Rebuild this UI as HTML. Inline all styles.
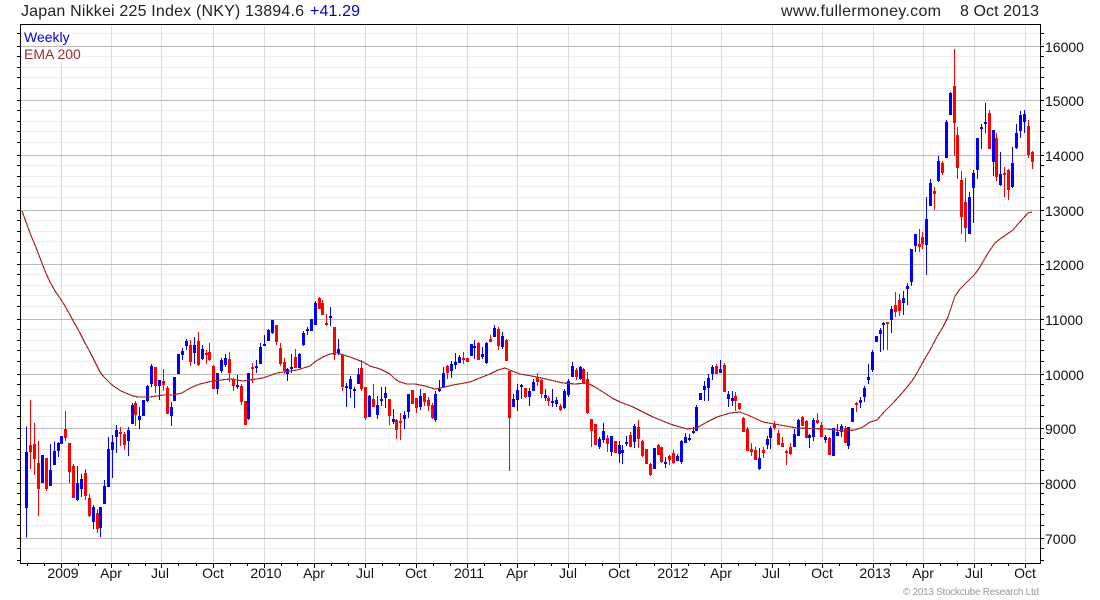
<!DOCTYPE html>
<html><head><meta charset="utf-8"><title>Japan Nikkei 225 Index</title>
<style>html,body{margin:0;padding:0;background:#fff}svg{display:block}text{font-family:"Liberation Sans",Arial,sans-serif}</style></head>
<body>
<svg width="1100" height="600" viewBox="0 0 1100 600" xmlns="http://www.w3.org/2000/svg">
<rect width="1100" height="600" fill="#fff"/>
<g fill="none" shape-rendering="crispEdges">
<path stroke="#eee" d="M21 33.5H1040M21 56.5H1040M21 67.5H1040M21 77.5H1040M21 88.5H1040M21 110.5H1040M21 121.5H1040M21 131.5H1040M21 142.5H1040M21 165.5H1040M21 176.5H1040M21 186.5H1040M21 197.5H1040M21 220.5H1040M21 231.5H1040M21 241.5H1040M21 252.5H1040M21 274.5H1040M21 285.5H1040M21 295.5H1040M21 306.5H1040M21 329.5H1040M21 340.5H1040M21 350.5H1040M21 361.5H1040M21 384.5H1040M21 395.5H1040M21 405.5H1040M21 416.5H1040M21 438.5H1040M21 449.5H1040M21 459.5H1040M21 470.5H1040M21 493.5H1040M21 504.5H1040M21 514.5H1040M21 525.5H1040M21 548.5H1040"/>
<path stroke="#dcdcdc" d="M61.5 25V563M111.5 25V563M161.5 25V563M213.5 25V563M264.5 25V563M314.5 25V563M365.5 25V563M416.5 25V563M467.5 25V563M517.5 25V563M568.5 25V563M619.5 25V563M671.5 25V563M721.5 25V563M772.5 25V563M822.5 25V563M873.5 25V563M923.5 25V563M974.5 25V563M1025.5 25V563"/>
<path stroke="#bbb" d="M21 46.5H1040M21 100.5H1040M21 155.5H1040M21 210.5H1040M21 264.5H1040M21 319.5H1040M21 374.5H1040M21 428.5H1040M21 483.5H1040M21 538.5H1040"/>
</g>
<rect x="22" y="26" width="50" height="20" fill="#fff"/>
<rect x="22" y="47" width="59" height="15" fill="#fff"/>
<g fill="none" shape-rendering="crispEdges" stroke="#000">
<path d="M20.5 24V564M20 24.5H1040.5M1040.5 24V564M20 563.5H1041"/>
<path d="M17 33.5h3M17 46.5h3M17 56.5h3M17 67.5h3M17 77.5h3M17 88.5h3M17 100.5h3M17 110.5h3M17 121.5h3M17 131.5h3M17 142.5h3M17 155.5h3M17 165.5h3M17 176.5h3M17 186.5h3M17 197.5h3M17 210.5h3M17 220.5h3M17 231.5h3M17 241.5h3M17 252.5h3M17 264.5h3M17 274.5h3M17 285.5h3M17 295.5h3M17 306.5h3M17 319.5h3M17 329.5h3M17 340.5h3M17 350.5h3M17 361.5h3M17 374.5h3M17 384.5h3M17 395.5h3M17 405.5h3M17 416.5h3M17 428.5h3M17 438.5h3M17 449.5h3M17 459.5h3M17 470.5h3M17 483.5h3M17 493.5h3M17 504.5h3M17 514.5h3M17 525.5h3M17 538.5h3M17 548.5h3M17 560.5h3"/>
<path d="M1041 33.5h3M1041 46.5h3M1041 56.5h3M1041 67.5h3M1041 77.5h3M1041 88.5h3M1041 100.5h3M1041 110.5h3M1041 121.5h3M1041 131.5h3M1041 142.5h3M1041 155.5h3M1041 165.5h3M1041 176.5h3M1041 186.5h3M1041 197.5h3M1041 210.5h3M1041 220.5h3M1041 231.5h3M1041 241.5h3M1041 252.5h3M1041 264.5h3M1041 274.5h3M1041 285.5h3M1041 295.5h3M1041 306.5h3M1041 319.5h3M1041 329.5h3M1041 340.5h3M1041 350.5h3M1041 361.5h3M1041 374.5h3M1041 384.5h3M1041 395.5h3M1041 405.5h3M1041 416.5h3M1041 428.5h3M1041 438.5h3M1041 449.5h3M1041 459.5h3M1041 470.5h3M1041 483.5h3M1041 493.5h3M1041 504.5h3M1041 514.5h3M1041 525.5h3M1041 538.5h3M1041 548.5h3M1041 560.5h3"/>
<path d="M61.5 564v4M111.5 564v4M161.5 564v4M213.5 564v4M264.5 564v4M314.5 564v4M365.5 564v4M416.5 564v4M467.5 564v4M517.5 564v4M568.5 564v4M619.5 564v4M671.5 564v4M721.5 564v4M772.5 564v4M822.5 564v4M873.5 564v4M923.5 564v4M974.5 564v4M1025.5 564v4"/>
<path d="M27.5 564v2M44.5 564v2M78.5 564v2M95.5 564v2M128.5 564v2M145.5 564v2M178.5 564v2M196.5 564v2M230.5 564v2M247.5 564v2M281.5 564v2M297.5 564v2M331.5 564v2M348.5 564v2M382.5 564v2M399.5 564v2M433.5 564v2M450.5 564v2M484.5 564v2M500.5 564v2M534.5 564v2M551.5 564v2M585.5 564v2M602.5 564v2M636.5 564v2M654.5 564v2M688.5 564v2M704.5 564v2M738.5 564v2M755.5 564v2M789.5 564v2M805.5 564v2M839.5 564v2M856.5 564v2M890.5 564v2M906.5 564v2M940.5 564v2M957.5 564v2M991.5 564v2M1008.5 564v2"/>
</g>

<g fill="none" shape-rendering="crispEdges">
<g transform="translate(10 390) scale(.33333)">
<path stroke="#00f" stroke-width="3" d="M49 110V443M121 162V288M133 155V225M145 156V201M202 228V333M214 252V321M250 345V417M271 351V441M283 270V342M295 141V291M307 135V264M319 105V189M355 111V198M367 39V102"/>
<path stroke="#00f" stroke-width="9" d="M49 186V354M97 195V279M121 240V288M133 183V225M145 159V183M155 138V162M202 279V330M214 267V297M250 351V396M271 351V414M283 288V342M295 177V291M307 156V180M319 120V141M355 120V153M367 45V102"/>
<path stroke="#f00" stroke-width="3" d="M61 30V237M73 99V255M85 153V378M109 204V303M166 63V153M178 159V279M190 222V324M226 237V330M238 312V381M262 357V429M331 111V168M343 126V180"/>
<path stroke="#f00" stroke-width="9" d="M61 165V186M73 162V207M85 219V297M109 204V297M166 117V144M178 159V246M190 228V324M226 249V318M238 324V378M262 369V417M331 126V132M343 132V165"/>
</g>
<g transform="translate(130 280) scale(.33333)">
<path stroke="#00f" stroke-width="3" d="M28 381V447M52 315V366M64 252V321M88 300V360M124 366V438M157 204V240M169 177V210M193 171V252M217 195V240M262 279V342M274 234V279M286 222V261M322 285V327M355 279V420M379 240V279M391 189V252M403 165V198M415 147V183M427 120V162M472 264V303M484 222V279M508 219V264M520 153V198M532 141V165M556 63V135M601 81V138M625 177V225M649 309V381M661 288V354M673 321V384M685 264V312M718 345V411"/>
<path stroke="#00f" stroke-width="9" d="M28 408V420M40 360V408M52 318V363M64 258V312M88 300V318M124 381V408M133 291V363M145 222V282M157 213V225M169 183V198M193 195V219M217 207V237M262 279V327M274 240V273M286 234V255M322 315V321M355 279V417M379 258V264M391 201V252M403 192V198M415 150V183M427 120V159M472 267V282M484 261V267M508 222V264M520 159V195M532 147V153M544 117V153M556 69V135M601 108V114M625 207V219M649 318V324M661 297V327M673 327V333M685 282V312M718 348V411"/>
<path stroke="#f00" stroke-width="3" d="M16 363V438M76 261V339M100 267V333M112 318V402M181 180V258M205 156V258M229 210V252M238 189V243M250 255V327M298 216V306M310 294V333M334 312V375M367 249V309M439 135V195M451 189V258M463 234V282M496 207V264M568 51V87M577 60V105M589 102V138M613 141V240M637 225V333M694 240V333M706 321V420M730 312V381"/>
<path stroke="#f00" stroke-width="9" d="M16 369V405M76 261V318M100 303V315M112 324V402M181 195V246M205 183V255M229 219V225M238 216V240M250 258V327M298 237V279M310 300V318M334 318V366M346 363V435M367 261V267M439 135V186M451 204V252M463 246V273M496 231V264M568 54V87M577 69V105M589 129V135M613 141V225M637 225V321M694 264V327M706 321V414M730 357V381"/>
</g>
<g transform="translate(370 300) scale(.33333)">
<path stroke="#00f" stroke-width="3" d="M22 288V357M34 261V318M46 261V324M70 327V372M103 333V387M115 282V354M151 267V330M196 273V366M208 240V276M220 201V261M244 183V234M256 159V207M268 165V189M313 120V177M337 141V177M349 126V192M373 75V111M397 96V147M430 282V321M442 252V333M454 252V297M478 264V318M490 237V273M526 267V303M547 267V321M559 291V321M583 267V327M595 237V291M607 186V231M631 198V240M688 411V447M700 369V429M724 408V468M748 423V489M757 435V492M769 408V438M793 372V444M886 471V504M922 462V483M934 420V492M946 399V429M958 402V423M970 381V402M979 315V393M1003 243V303M1015 222V303M1027 195V240M1051 180V219M1075 273V321M1087 273V318"/>
<path stroke="#00f" stroke-width="9" d="M22 315V345M34 297V303M46 279V294M70 357V366M103 345V357M115 282V336M151 288V321M196 282V360M208 267V273M220 219V261M244 192V213M256 186V195M268 171V189M304 132V168M313 138V144M337 162V171M349 129V189M373 84V111M397 108V141M430 297V321M442 270V300M454 255V261M478 273V291M490 246V273M526 285V294M547 303V309M559 300V312M583 273V324M595 243V285M607 198V231M631 201V237M688 417V441M700 393V420M724 408V456M748 435V462M757 450V459M769 426V432M793 378V426M853 444V507M886 486V492M922 468V483M934 423V486M946 411V429M958 414V420M970 393V399M979 321V393M991 279V300M1003 258V270M1015 234V264M1027 201V222M1051 207V219M1075 282V297M1087 294V303"/>
<path stroke="#f00" stroke-width="3" d="M58 297V375M79 357V417M91 339V420M139 294V339M163 279V318M175 291V333M187 309V357M232 195V237M280 156V192M325 126V180M361 105V126M385 81V150M409 117V183M418 213V513M466 264V294M502 219V258M514 237V294M535 288V318M571 312V333M619 204V240M640 204V252M652 216V342M664 357V441M712 405V456M781 396V441M805 360V444M817 420V471M841 489V528M865 432V465M874 441V489M898 465V495M910 450V492M1039 192V222M1063 189V276M1096 276V333"/>
<path stroke="#f00" stroke-width="9" d="M58 297V348M79 360V390M91 363V369M127 270V312M139 294V324M163 279V306M175 300V318M187 315V354M232 198V219M280 174V180M292 174V186M325 129V180M361 117V126M385 87V138M409 120V183M418 213V354M466 264V291M502 231V246M514 240V282M535 294V303M571 318V330M619 210V231M640 207V252M652 237V339M664 357V393M676 372V435M712 414V432M736 423V459M781 405V441M805 381V417M817 423V468M829 447V492M841 492V525M865 435V465M874 441V486M898 468V480M910 459V489M1039 198V222M1063 195V276M1096 288V303"/>
</g>
<g transform="translate(730 380) scale(.33333)">
<path stroke="#00f" stroke-width="3" d="M88 204V270M112 168V207M121 138V207M193 147V201M205 117V168M238 162V204M250 114V183M286 165V189M322 132V168M334 132V171M355 141V207M391 51V84M403 18V66"/>
<path stroke="#00f" stroke-width="9" d="M88 234V267M112 177V195M121 144V174M193 162V201M205 120V168M238 165V174M250 120V171M286 171V180M310 144V228M322 156V168M334 138V156M355 141V198M367 84V126M391 60V69M403 24V51"/>
<path stroke="#f00" stroke-width="3" d="M28 69V90M40 111V156M52 141V213M64 189V228M76 201V240M100 201V234M133 123V150M145 150V195M157 171V201M169 210V255M181 189V225M217 108V138M229 120V174M262 99V132M274 126V171M298 171V225M346 138V189M379 66V96"/>
<path stroke="#f00" stroke-width="9" d="M28 69V87M40 114V156M52 147V213M64 207V216M76 210V240M100 210V219M133 132V144M145 159V195M157 189V201M169 213V219M181 201V222M217 111V138M229 123V174M262 120V129M274 135V171M298 174V225M346 144V189M379 69V75"/>
</g>
<g transform="translate(850 210) scale(.33333)">
<path stroke="#00f" stroke-width="3" d="M55 462V522M67 420V486M91 354V426M100 336V420M124 288V369M160 243V315M172 219V285M184 117V228M196 72V126M229 -39V195"/>
<path stroke="#00f" stroke-width="9" d="M55 501V510M67 426V480M79 378V396M91 360V372M100 339V345M124 297V330M160 264V279M172 228V237M184 117V216M196 72V108M229 27V105"/>
<path stroke="#f00" stroke-width="3" d="M112 336V420M136 246V321M148 252V318M208 57V126M217 66V117"/>
<path stroke="#f00" stroke-width="9" d="M112 336V342M136 285V306M148 270V303M208 102V111M217 81V102"/>
</g>
<g transform="translate(880 0) scale(.33333)">
<path stroke="#00f" stroke-width="3" d="M151 537V618M175 468V546M199 360V474M211 276V345M268 576V702M280 510V669M292 414V537M304 372V447M316 309V399M340 390V528M361 456V558M397 441V564M409 372V447M421 333V414M433 330V399"/>
<path stroke="#00f" stroke-width="9" d="M151 549V618M175 483V543M199 366V474M211 279V345M268 591V702M280 519V564M292 414V510M304 381V387M316 366V372M340 390V486M361 522V555M397 489V561M409 399V444M421 345V393M433 342V366"/>
<path stroke="#f00" stroke-width="3" d="M163 561V630M187 483V525M223 147V468M232 381V537M244 513V702M256 534V726M328 330V447M349 399V543M373 501V591M385 507V600M445 360V474M457 453V507"/>
<path stroke="#f00" stroke-width="9" d="M163 573V582M187 489V519M223 258V369M232 405V504M244 540V651M256 606V684M328 339V447M349 414V531M373 519V525M385 510V570M445 378V465M457 456V486"/>
</g>
</g>

<polyline fill="none" stroke="#a52a2a" stroke-width="1.2" shape-rendering="crispEdges" points="22,211 26,222 30,233 35,245 40,258 45,271 50,282 55,291 60,298 65,306 70,315 75,324 80,333 85,343 90,352 95,362 100,372 104,377 107,380 111,384 115,387 121,391 128,394 133,396 138,397 150,397 163,395 173,395 182,393 190,388 200,384 213,381 230,379 243,381 263,378 277,373 297,370 310,366 316,361 323,357 330,354 337,353 350,357 363,362 370,366 380,369 390,374 395,379 400,382 407,384 415,384 425,386 435,389 445,387 453,385 470,382 480,378 490,374 498,370 505,368 512,371 520,374 537,377 550,380 563,383 575,384 587,383 595,387 603,392 612,398 620,402 633,407 643,412 653,417 670,424 680,427 687,429 697,428 707,422 717,417 730,413 740,412 750,416 763,422 780,425 797,428 827,429 843,431 855,430 863,427 870,422 877,420 885,411 893,403 903,392 912,381 917,373 923,362 930,350 938,335 943,327 948,317 952,305 955,296 960,289 968,281 975,274 980,267 988,253 995,243 1000,239 1013,230 1018,224 1028,213 1032,212"/>

<text x="21" y="16" font-size="16" fill="#222" textLength="283" lengthAdjust="spacing">Japan Nikkei 225 Index (NKY) 13894.6</text>
<text x="310" y="16" font-size="16" fill="#00c" textLength="50" lengthAdjust="spacing">+41.29</text>
<text x="781" y="16" font-size="16" fill="#222" textLength="160" lengthAdjust="spacing">www.fullermoney.com</text>
<text x="960" y="16" font-size="16" fill="#222" textLength="79" lengthAdjust="spacing">8 Oct 2013</text>
<text x="24" y="42" font-size="14" fill="#00c">Weekly</text>
<text x="24" y="59" font-size="14" fill="#a52a2a">EMA 200</text>

<g font-size="14" fill="#111">
<text x="1045" y="52">16000</text><text x="1045" y="106">15000</text><text x="1045" y="161">14000</text><text x="1045" y="216">13000</text><text x="1045" y="270">12000</text><text x="1045" y="325">11000</text><text x="1045" y="380">10000</text><text x="1045" y="434">9000</text><text x="1045" y="489">8000</text><text x="1045" y="544">7000</text>
</g>
<g font-size="14" fill="#111" text-anchor="middle">
<text x="63" y="578">2009</text><text x="111" y="578">Apr</text><text x="160" y="578">Jul</text><text x="213" y="578">Oct</text><text x="266" y="578">2010</text><text x="314" y="578">Apr</text><text x="365" y="578">Jul</text><text x="416" y="578">Oct</text><text x="469" y="578">2011</text><text x="517" y="578">Apr</text><text x="568" y="578">Jul</text><text x="619" y="578">Oct</text><text x="673" y="578">2012</text><text x="721" y="578">Apr</text><text x="771" y="578">Jul</text><text x="822" y="578">Oct</text><text x="875" y="578">2013</text><text x="923" y="578">Apr</text><text x="974" y="578">Jul</text><text x="1025" y="578">Oct</text>
</g>
<text x="903" y="595" font-size="10" fill="#999" textLength="136" lengthAdjust="spacing">© 2013 Stockcube Research Ltd</text>
</svg>
</body></html>
